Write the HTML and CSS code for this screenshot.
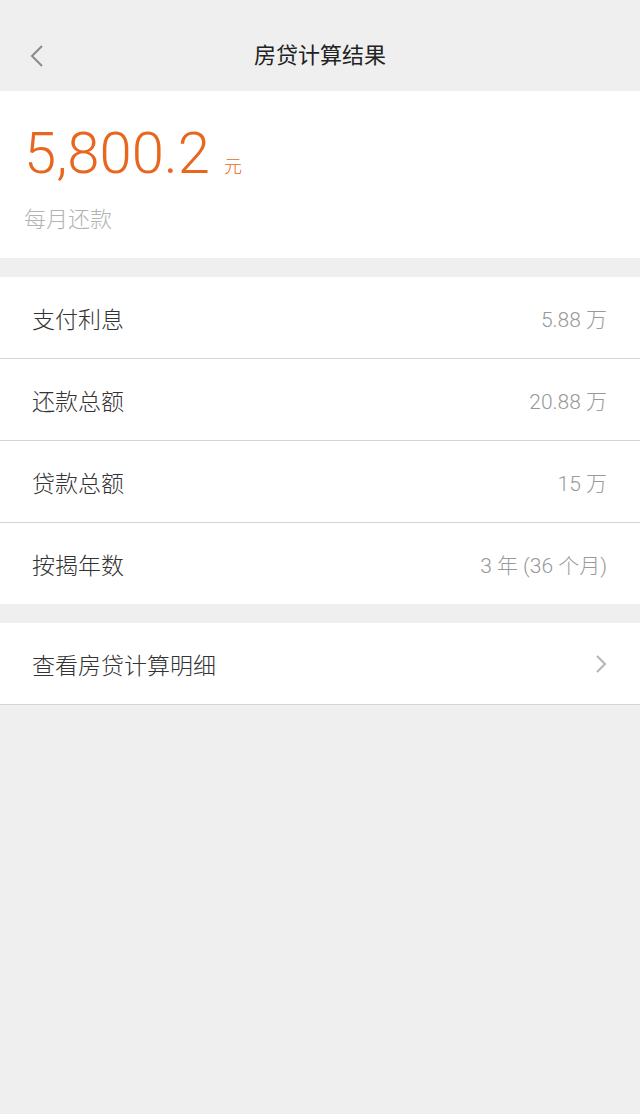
FILE: index.html
```html
<!DOCTYPE html>
<html lang="zh-CN">
<head>
  <meta charset="UTF-8" />
  <meta name="viewport" content="width=device-width, initial-scale=1.0" />
  <title>房贷计算结果</title>
  <link rel="stylesheet" href="styles.css">
</head>
<body>
  <header class="topbar">
    <a class="back" href="#">
      <svg width="14" height="24" viewBox="0 0 14 24">
        <polyline points="12,2 2,12 12,22" fill="none" stroke="#8a8a8a" stroke-width="2" />
      </svg>
    </a>
    <h1>房贷计算结果</h1>
  </header>

  <section class="summary">
    <div class="amount">
      <span class="num">5,800.2</span>
      <span class="unit">元</span>
    </div>
    <p class="caption">每月还款</p>
  </section>

  <ul class="list">
    <li class="row"><span class="label">支付利息</span><span class="value">5.88 万</span></li>
    <li class="row"><span class="label">还款总额</span><span class="value">20.88 万</span></li>
    <li class="row"><span class="label">贷款总额</span><span class="value">15 万</span></li>
    <li class="row"><span class="label">按揭年数</span><span class="value">3 年 (36 个月)</span></li>
  </ul>

  <ul class="list">
    <li class="row link">
      <span class="label">查看房贷计算明细</span>
      <svg width="12" height="20" viewBox="0 0 12 20">
        <polyline points="2,2 10,10 2,18" fill="none" stroke="#b5b5b5" stroke-width="2" />
      </svg>
    </li>
  </ul>
</body>
</html>
```

FILE: styles.css
```css
body {
  margin: 0;
  padding: 0;
  background: #efefef;
  font-family: "Roboto", "Noto Sans CJK SC", sans-serif;
  font-weight: 300;
  color: #333;
}

.topbar {
  height: 91px;
  display: flex;
  align-items: center;
  justify-content: center;
  position: relative;
  background: #efefef;
}

.topbar h1 {
  margin: 14px 0 0;
  font-size: 22px;
  font-weight: 400;
  color: #222;
}

.back {
  position: absolute;
  left: 30px;
  top: 44px;
}

.summary {
  background: #fff;
  padding: 28px 24px 25px;
  margin-bottom: 19px;
}

.amount {
  display: flex;
  align-items: baseline;
  color: #e8661e;
}

.amount .num {
  font-size: 58px;
  line-height: 68px;
}

.amount .unit {
  font-size: 18px;
  margin-left: 14px;
}

.caption {
  margin: 20px 0 0;
  font-size: 22px;
  line-height: 26px;
  color: #b3b3b3;
}

.list {
  list-style: none;
  margin: 0 0 19px;
  padding: 0;
  background: #fff;
}

.row {
  height: 81px;
  display: flex;
  align-items: center;
  justify-content: space-between;
  padding: 0 33px 0 32px;
  border-bottom: 1px solid #d4d4d4;
}

.list:first-of-type .row:last-child {
  border-bottom: none;
}

.label {
  font-size: 23px;
  color: #333;
}

.value {
  font-size: 21px;
  color: #999;
}
```
